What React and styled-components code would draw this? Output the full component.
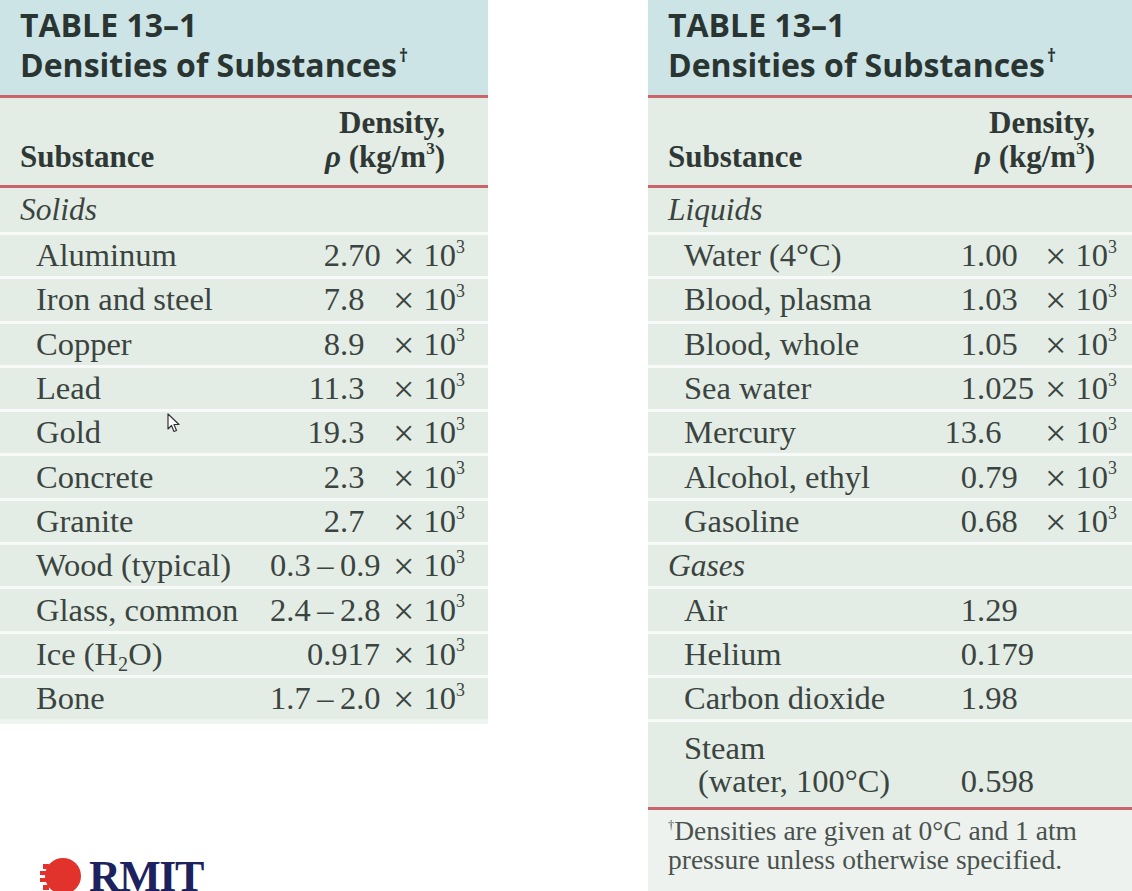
import React from 'react';
import styled, { createGlobalStyle } from 'styled-components';

const GlobalStyle = createGlobalStyle`
  html, body {
    margin:0;
    padding:0;
    background:#fff;
    height:891px;
    overflow:hidden;
  }
`

const Page = styled.div`
  position:relative;
  display:flex;
  gap:160px;
  width:1132px;
  height:891px;
  overflow:hidden;
  font-family:"Liberation Serif", "Times New Roman", serif;
  color:#3b4440;
`

const LeftColumn = styled.div`
  display:flex;
  flex-direction:column;
  width:488px;
`

const Table = styled.div`
  display:flex;
  flex-direction:column;
  width:${p => p.$width}px;
  background:#e3ede5;
  ${p => p.$full && 'height:891px;'}
`

const TitleBand = styled.div`
  background:#cde4e6;
  padding:5px 0 10px 20px;
  border-bottom:3px solid #c8646a;
  font-family:"Open Sans", "Liberation Sans", sans-serif;
  font-weight:700;
  font-size:32px;
  line-height:40px;
  color:#2a3532;
  white-space:nowrap;
`

const TitleLine = styled.div`
  height:40px;
`

const Dagger = styled.span`
  font-size:0.55em;
  position:relative;
  top:-0.85em;
  line-height:0;
  margin-left:2px;
`

const HeadRow = styled.div`
  display:flex;
  justify-content:space-between;
  align-items:flex-end;
  padding:8px ${p => p.$padRight}px 11px 20px;
  border-bottom:3px solid #c8646a;
  font-weight:700;
  font-size:31px;
  line-height:34px;
  color:#2f3835;
`

const DensityHead = styled.div`
  text-align:right;
`

const Rho = styled.i`
  font-weight:700;
`

const Sup = styled.sup`
  font-size:0.55em;
  position:relative;
  top:-0.75em;
  vertical-align:baseline;
  line-height:0;
`

const Sub = styled.sub`
  font-size:0.62em;
  position:relative;
  top:0.3em;
  vertical-align:baseline;
  line-height:0;
`

const Section = styled.div`
  display:flex;
  align-items:center;
  box-sizing:border-box;
  height:${p => p.$first ? 44 : 44.3}px;
  padding-left:20px;
  border-top:${p => p.$first ? 'none' : '3px solid #f7faf8'};
  font-style:italic;
  font-size:31.5px;
`

const Row = styled.div`
  display:grid;
  grid-template-columns:1fr ${p => p.$cols};
  align-items:${p => p.$tall ? 'end' : 'center'};
  box-sizing:border-box;
  height:${p => p.$tall ? 88 : 44.3}px;
  padding:0 ${p => p.$padRight}px ${p => p.$tall ? 9 : 0}px 36px;
  border-top:3px solid #f7faf8;
  font-size:32.5px;
  line-height:33px;
  white-space:nowrap;
`

const Label = styled.span`
  padding-left:${p => p.$indent || 0}px;
`

const Int = styled.span`
  text-align:right;
  ${p => p.$wide && 'grid-column:2 / 4; padding-right:10px;'}
`

const Frac = styled.span`
  text-align:left;
`

const Exp = styled.span`
  padding-left:3px;
`

const Times = styled.span`
  display:inline-block;
  font-size:38px;
  line-height:0;
  margin-right:9px;
  position:relative;
  top:3px;
`

const TableEnd = styled.div`
  height:5px;
  background:#eef4f0;
`

const Footnote = styled.div`
  flex:1;
  background:#eef2ef;
  border-top:3px solid #c8646a;
  padding:6px 0 0 20px;
  font-size:27.5px;
  line-height:29px;
  color:#4a524e;
  white-space:nowrap;
`

const FootDagger = styled.span`
  font-size:0.45em;
  position:relative;
  top:-0.95em;
  line-height:0;
`

const Logo = styled.div`
  display:flex;
  align-items:flex-start;
  gap:7px;
  margin-top:133px;
  padding-left:40px;
`

const LogoText = styled.span`
  font-family:"Liberation Serif", "Times New Roman", serif;
  font-weight:700;
  font-size:44px;
  line-height:1;
  color:#1c225e;
  letter-spacing:-1.5px;
  margin-top:-2px;
`

const Cursor = styled.svg`
  position:absolute;
  left:167px;
  top:413px;
`

const times = <Exp><Times>×</Times>10<Sup>3</Sup></Exp>

const Value = ({ v, wide, exp = true }) => {
  if (wide) return <><Int $wide>{v}</Int>{exp ? times : <span />}</>
  const [i, f] = v.split('.')
  return <><Int>{i}</Int><Frac>.{f}</Frac>{exp ? times : <span />}</>
}

const solids = [
  ['Aluminum', '2.70'],
  ['Iron and steel', '7.8'],
  ['Copper', '8.9'],
  ['Lead', '11.3'],
  ['Gold', '19.3'],
  ['Concrete', '2.3'],
  ['Granite', '2.7'],
  ['Wood (typical)', '0.3\u2009–\u20090.9', true],
  ['Glass, common', '2.4\u2009–\u20092.8', true],
  [<>Ice (H<Sub>2</Sub>O)</>, '0.917', true],
  ['Bone', '1.7\u2009–\u20092.0', true],
]

const liquids = [
  ['Water (4°C)', '1.00'],
  ['Blood, plasma', '1.03'],
  ['Blood, whole', '1.05'],
  ['Sea water', '1.025'],
  ['Mercury', '13.6'],
  ['Alcohol, ethyl', '0.79'],
  ['Gasoline', '0.68'],
]

const gases = [
  ['Air', '1.29'],
  ['Helium', '0.179'],
  ['Carbon dioxide', '1.98'],
]

const Title = () => (
  <TitleBand>
    <TitleLine>TABLE 13–1</TitleLine>
    <TitleLine>Densities of Substances<Dagger>†</Dagger></TitleLine>
  </TitleBand>
)

const Head = ({ padRight }) => (
  <HeadRow $padRight={padRight}>
    <span>Substance</span>
    <DensityHead>
      Density,<br />
      <Rho>ρ</Rho> (kg/m<Sup>3</Sup>)
    </DensityHead>
  </HeadRow>
)

const LEFT_COLS = '70px 50px 80px'
const RIGHT_COLS = '77px 65px 80px'

export default function App() {
  return (
    <Page>
      <GlobalStyle />
      <LeftColumn>
        <Table $width={488}>
          <Title />
          <Head padRight={43} />
          <Section $first>Solids</Section>
          {solids.map(([name, v, wide], i) => (
            <Row key={i} $cols={LEFT_COLS} $padRight={18}>
              <Label>{name}</Label>
              <Value v={v} wide={wide} />
            </Row>
          ))}
          <TableEnd />
        </Table>
        <Logo>
          <svg width="42" height="40" viewBox="0 0 42 40">
            <circle cx="23" cy="19" r="18" fill="#e1332b" />
            <rect x="3" y="7" width="6" height="5" fill="#e1332b" />
            <rect x="0" y="14" width="7" height="4" fill="#e1332b" />
            <rect x="0" y="21" width="7" height="4" fill="#e1332b" />
            <rect x="3" y="28" width="6" height="5" fill="#e1332b" />
          </svg>
          <LogoText>RMIT</LogoText>
        </Logo>
      </LeftColumn>

      <Table $width={484} $full>
        <Title />
        <Head padRight={37} />
        <Section $first>Liquids</Section>
        {liquids.map(([name, v], i) => (
          <Row key={i} $cols={RIGHT_COLS} $padRight={10}>
            <Label>{name}</Label>
            <Value v={v} />
          </Row>
        ))}
        <Section>Gases</Section>
        {gases.map(([name, v], i) => (
          <Row key={i} $cols={RIGHT_COLS} $padRight={10}>
            <Label>{name}</Label>
            <Value v={v} exp={false} />
          </Row>
        ))}
        <Row $cols={RIGHT_COLS} $padRight={10} $tall>
          <Label>Steam<br /><Label $indent={14}>(water, 100°C)</Label></Label>
          <Value v="0.598" exp={false} />
        </Row>
        <Footnote>
          <FootDagger>†</FootDagger>Densities are given at 0°C and 1 atm<br />
          pressure unless otherwise specified.
        </Footnote>
      </Table>

      <Cursor width="14" height="20" viewBox="0 0 14 20">
        <path d="M1 1 L1 16 L4.5 12.5 L7 18.5 L9.5 17.5 L7 11.5 L12 11.5 Z" fill="#fff" stroke="#333" strokeWidth="1.2" strokeLinejoin="round" />
      </Cursor>
    </Page>
  )
}
